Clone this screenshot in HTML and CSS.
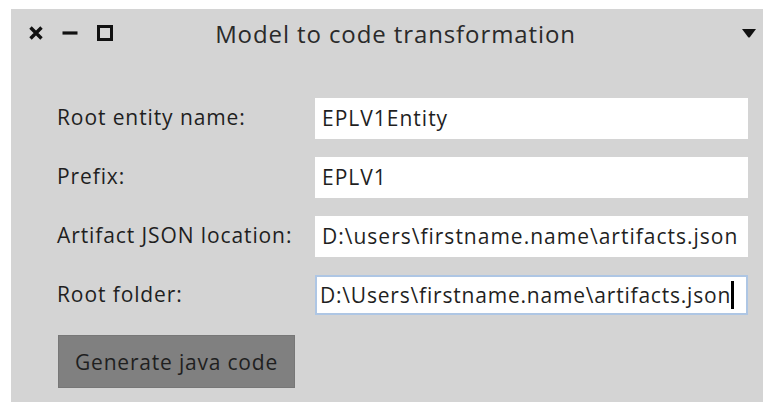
FILE: index.html
```html
<!DOCTYPE html>
<html lang="en">

<head>
    <meta charset="UTF-8">
    <title>Model to code transformation</title>
    <link rel="stylesheet" href="styles.css">
</head>

<body>

    <div class="window">
        <!-- title bar -->
        <div class="titlebar">
            <div class="controls">
                <svg class="icon" width="16" height="16" viewBox="0 0 16 16">
                    <path d="M2.5 2.5 L13.5 13.5 M13.5 2.5 L2.5 13.5" stroke="#111" stroke-width="3.4" />
                </svg>
                <svg class="icon" width="16" height="16" viewBox="0 0 16 16">
                    <path d="M0.5 8 H15.5" stroke="#111" stroke-width="3.2" />
                </svg>
                <svg class="icon" width="18" height="18" viewBox="0 0 18 18">
                    <rect x="2.5" y="2.5" width="13" height="13" fill="none" stroke="#111" stroke-width="3" />
                </svg>
            </div>
            <div class="title">Model to code transformation</div>
            <div class="menu">
                <svg width="16" height="12" viewBox="0 0 16 12">
                    <path d="M1 2 H15 L9 10 Q8 11 7 10 Z" fill="#111" />
                </svg>
            </div>
        </div>

        <!-- form -->
        <div class="form">
            <label>Root entity name:</label>
            <div class="field">EPLV1Entity</div>

            <label>Prefix:</label>
            <div class="field">EPLV1</div>

            <label>Artifact JSON location:</label>
            <div class="field">D:\users\firstname.name\artifacts.json</div>

            <label>Root folder:</label>
            <div class="field focused"><span class="caret">D:\Users\firstname.name\artifacts.json</span></div>
        </div>

        <button class="generate">Generate java code</button>
    </div>

</body>

</html>
```

FILE: styles.css
```css
* {
    box-sizing: border-box;
}

body {
    margin: 0;
    background: #fff;
    font-family: 'Open Sans', sans-serif;
    color: #1f1f1f;
}

.window {
    margin: 9px 0 0 11px;
    width: 752px;
    height: 393px;
    background: #d4d4d4;
}

.titlebar {
    height: 48px;
    display: grid;
    grid-template-columns: 1fr auto 1fr;
    align-items: center;
    padding: 0 6px 0 17px;
}

.controls {
    display: flex;
    align-items: center;
    gap: 18px;
}

.icon {
    display: block;
}

.title {
    font-size: 24px;
    letter-spacing: 0.9px;
    color: #2a2a2a;
    padding-left: 6px;
}

.menu {
    justify-self: end;
    display: flex;
}

.form {
    display: grid;
    grid-template-columns: 258px 1fr;
    row-gap: 18px;
    align-items: center;
    margin-top: 41px;
    padding: 0 15px 0 46px;
}

label {
    font-size: 21px;
    font-weight: 500;
    letter-spacing: 0.9px;
    color: #1f1f1f;
    margin-top: -3px;
}

.field {
    height: 41px;
    background: #fff;
    font-size: 21px;
    font-weight: 500;
    letter-spacing: 1px;
    line-height: 41px;
    padding-left: 7px;
    white-space: nowrap;
    overflow: hidden;
}

.field.focused {
    border: 2px solid #aec6e4;
    padding-left: 3px;
    line-height: 37px;
    height: 40px;
    letter-spacing: 0.8px;
}

.caret {
    border-right: 3px solid #000;
}

.generate {
    display: block;
    margin: 20px 0 0 47px;
    width: 237px;
    height: 53px;
    background: #808080;
    border: 1px solid #777;
    color: #1f1f1f;
    font-family: 'Open Sans', sans-serif;
    font-size: 21px;
    font-weight: 500;
    letter-spacing: 0.8px;
    padding: 0;
}
```
